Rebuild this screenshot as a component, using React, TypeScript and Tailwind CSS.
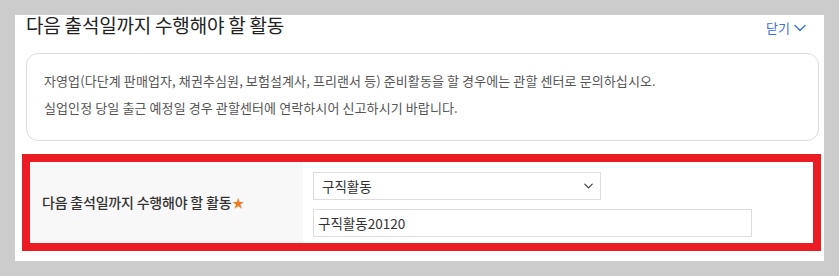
import React from 'react';

const font = { fontFamily: '"Noto Sans CJK KR", "Noto Sans", sans-serif' };

function ChevronDown({ className }: { className?: string }) {
  return (
    <svg viewBox="0 0 12 8" className={className} fill="none" stroke="currentColor">
      <path d="M1 1.5l5 5 5-5" strokeWidth="1.4" strokeLinecap="round" strokeLinejoin="round" />
    </svg>
  );
}

export default function App() {
  return (
    <div className="w-[839px] h-[276px] bg-[#cccccc] pt-[15px] pl-[15px]" style={font}>
      <div className="w-[809px] h-[246px] bg-white">
        {/* header */}
        <div className="h-[38px] flex items-start justify-between pl-[11px] pr-[18px]">
          <h2 className="text-[19px] leading-[20px] text-[#222] tracking-[-0.2px]">
            다음 출석일까지 수행해야 할 활동
          </h2>
          <button className="flex items-center gap-[4px] text-[13px] leading-[20px] text-[#3b6fd4] mt-[3px]">
            닫기
            <ChevronDown className="w-[12px] h-[8px]" />
          </button>
        </div>

        {/* notice */}
        <div className="ml-[11px] w-[793px] h-[88px] border border-[#dcdcdc] rounded-[12px] pt-[13px] pl-[17px] text-[13px] leading-[27px] text-[#555] tracking-[0.1px]">
          <p>자영업(다단계 판매업자, 채권추심원, 보험설계사, 프리랜서 등) 준비활동을 할 경우에는 관할 센터로 문의하십시오.</p>
          <p>실업인정 당일 출근 예정일 경우 관할센터에 연락하시어 신고하시기 바랍니다.</p>
        </div>

        {/* form row */}
        <div className="mt-[13px] ml-[7px] w-[799px] h-[97px] border-[8px] border-[#ec1c24] flex">
          <div className="w-[273px] bg-[#f8f8f8] flex items-center pl-[12px] text-[14px] font-medium text-[#333] tracking-[-0.2px]">
            다음 출석일까지 수행해야 할 활동
            <span className="text-[#f07a22] text-[12px] ml-[1px]">★</span>
          </div>
          <div className="flex-1 pl-[10px] pt-[10px] flex flex-col gap-[9px]">
            <div className="relative w-[288px] h-[28px]">
              <select
                className="appearance-none w-full h-full border border-[#dddddd] bg-white pl-[8px] text-[13.5px] text-[#333] outline-none"
                style={font}
                defaultValue="구직활동"
              >
                <option>구직활동</option>
              </select>
              <ChevronDown className="absolute right-[8px] top-[11px] w-[9px] h-[6px] text-[#333] pointer-events-none" />
            </div>
            <input
              className="w-[439px] h-[28px] border border-[#dddddd] bg-white pl-[4px] text-[13.5px] text-[#333] outline-none"
              style={font}
              defaultValue="구직활동20120"
            />
          </div>
        </div>
      </div>
    </div>
  );
}
